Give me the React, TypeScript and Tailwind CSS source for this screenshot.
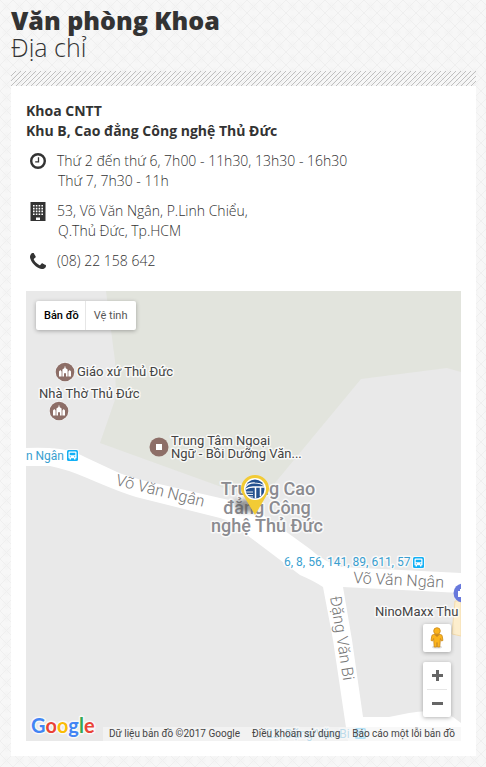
import type { ReactNode } from 'react';

const OPEN_SANS = "font-['Open_Sans','Noto_Sans',sans-serif]";

function PageTexture() {
  return (
    <svg className="absolute inset-0 -z-10 h-full w-full" aria-hidden="true">
      <defs>
        <pattern id="lattice" width="13" height="13" patternUnits="userSpaceOnUse">
          <rect width="13" height="13" fill="#f7f7f7" />
          <path d="M6.5 2 L11 6.5 L6.5 11 L2 6.5Z" fill="#f5f5f5" />
          <path d="M0 0 L13 13 M13 0 L0 13" stroke="#efefef" strokeWidth="1" fill="none" />
        </pattern>
      </defs>
      <rect width="100%" height="100%" fill="url(#lattice)" />
    </svg>
  );
}

function Stripes() {
  return (
    <svg className="block h-[15px] w-full" aria-hidden="true" shapeRendering="crispEdges">
      <defs>
        <pattern id="hatch" width="5" height="5" patternUnits="userSpaceOnUse">
          <path
            d="M4 0h1v1h-1z M3 1h1v1h-1z M2 2h1v1h-1z M1 3h1v1h-1z M0 4h1v1h-1z"
            fill="#bfbfbf"
          />
        </pattern>
      </defs>
      <rect width="100%" height="100%" fill="url(#hatch)" />
    </svg>
  );
}

function ClockIcon() {
  return (
    <svg width="16" height="16" viewBox="0 0 16 16" fill="none" stroke="#333" aria-hidden="true">
      <circle cx="8" cy="8" r="6.8" strokeWidth="2.4" />
      <path d="M8.5 4.2V8.9H5.2" strokeWidth="1.3" />
    </svg>
  );
}

function BuildingIcon() {
  return (
    <svg width="16" height="19" viewBox="0 0 16 19" aria-hidden="true">
      <path fill="#333" d="M0.5 0h15v19h-15z" />
      <path
        fill="#fff"
        d="M3 3h1.6v1.6H3z M5.8 3h1.6v1.6H5.8z M8.6 3h1.6v1.6H8.6z M11.4 3h1.6v1.6h-1.6z M3 5.8h1.6v1.6H3z M5.8 5.8h1.6v1.6H5.8z M8.6 5.8h1.6v1.6H8.6z M11.4 5.8h1.6v1.6h-1.6z M3 8.6h1.6v1.6H3z M5.8 8.6h1.6v1.6H5.8z M8.6 8.6h1.6v1.6H8.6z M11.4 8.6h1.6v1.6h-1.6z M3 11.4h1.6V13H3z M5.8 11.4h1.6V13H5.8z M8.6 11.4h1.6V13H8.6z M11.4 11.4h1.6V13h-1.6z M6 15.5h4V18H6z"
      />
    </svg>
  );
}

function PhoneIcon() {
  return (
    <svg width="16" height="16" viewBox="0 0 1408 1408" aria-hidden="true">
      <path
        fill="#333"
        d="M1408 1112q0 27-10 70.500t-21 68.500q-21 50-122 106q-94 51-186 51q-27 0-53-3.500t-57.500-12.500t-47-14.500t-55.500-20.500t-49-18q-98-35-175-83q-127-79-264-216t-216-264q-48-77-83-175q-3-9-18-49t-20.500-55.500t-14.500-47t-12.500-57.500t-3.500-53q0-92 51-186q56-101 106-122q25-11 68.500-21t70.500-10q14 0 21 3q18 6 53 76q11 19 30 54t35 63.500t31 53.500q3 4 17.500 25t21.500 35.500t7 28.500q0 20-28.500 50t-62 55t-62 53t-28.500 46q0 9 5 22.500t8.500 20.500t14 24t11.500 19q76 137 174 235t235 174q2 1 19 11.500t24 14t20.500 8.500t22.500 5q18 0 46-28.500t53-62t55-62t50-28.500q14 0 28.500 7t35.500 21.500t25 17.500q25 15 53.500 31t63.500 35t54 30q70 35 76 53q3 7 3 21z"
      />
    </svg>
  );
}

function ContactRow({ icon, children }: { icon: ReactNode; children: ReactNode }) {
  return (
    <li className="flex gap-[11px]">
      <span className="flex h-5 w-5 shrink-0 items-center justify-end pl-1">{icon}</span>
      <span className="min-w-0">{children}</span>
    </li>
  );
}

function BusStop({ x, y }: { x: number; y: number }) {
  return (
    <g transform={`translate(${x} ${y})`}>
      <rect x="-1" y="-1" width="13" height="13" rx="2" fill="#fff" opacity="0.7" />
      <rect width="11" height="11" rx="1.5" fill="#12b0f5" />
      <path fill="#fff" d="M2.5 1.500h6q1 0 1 1v5.700h-1v1.300h-1.500v-1.300h-3v1.300h-1.500v-1.300h-1v-5.700q0-1 1-1z" />
      <path fill="#12b0f5" d="M2.700 2.700h5.600v2.600h-5.600z M2.800 6.200h1v1h-1z M7.200 6.200h1v1h-1z" />
    </g>
  );
}

function ChurchPin({ x, y }: { x: number; y: number }) {
  return (
    <g transform={`translate(${x} ${y})`}>
      <circle r="10" fill="#fff" opacity="0.5" />
      <circle r="9.300" fill="#8d6e67" />
      <path
        fill="#fff"
        d="M-6 4.500v-5l1.300-1.500 1.300 1.500v5z M3.400 4.500v-5l1.300-1.500 1.300 1.500v5z M-2.600 4.500v-7l2.100-1.500v-1.500h1v1.500l2.100 1.500v7h-1.600v-2.500a1 1 0 0 0-2 0v2.500z"
      />
    </g>
  );
}

function MapDrawing() {
  return (
    <svg
      className="block h-full w-full font-['Roboto','Noto_Sans',sans-serif]"
      viewBox="0 0 435 450"
      preserveAspectRatio="xMidYMid slice"
      role="img"
      aria-label="Bản đồ"
    >
      <rect width="435" height="450" fill="#e9e9e9" />
      <path d="M80 0L89 70L90 106L74 152L234 210L335 88L421 77L435 81V0Z" fill="#e2e4dd" />
      <path d="M429 310L426 343L435 345V310Z" fill="#fdeecd" stroke="#f3dcae" />

      <path
        fill="#fff"
        d="M0 157Q18 156 34 158Q48 160 61 167L91 181Q100 185 120 190L194 207Q218 211 237 224L284 258Q298 271 316 276L435 282V302L317 296L326 349L337 426H363L383 422Q410 417 427 426L435 432V450H322L307 349L297 296Q288 290 274 284L217 241Q206 230 194 227L110 206Q96 202 61 187Q40 178 24 175H0Z"
      />

      <g fill="#777" fontSize="16" fontWeight="300">
        <text transform="translate(89 194) rotate(14)">Võ Văn Ngân</text>
        <text transform="translate(327 292) rotate(3)">Võ Văn Ngân</text>
        <text transform="translate(304 306) rotate(81)">Đặng Văn Bi</text>
      </g>

      <g className="[paint-order:stroke]" stroke="#fff" strokeWidth="3" strokeOpacity="0.75" strokeLinejoin="round">
        <g fill="#3a9fd0" fontSize="12">
          <text x="38" y="169" textAnchor="end">Võ Văn Ngân</text>
          <text x="258" y="275">6, 8, 56, 141, 89, 611, 57</text>
          <text x="240" y="447">23, Đặng Văn Bi</text>
        </g>
        <g fill="#444" fontSize="13">
          <text x="51" y="85">Giáo xứ Thủ Đức</text>
          <text x="13" y="107">Nhà Thờ Thủ Đức</text>
          <text x="145" y="154">Trung Tâm Ngoại</text>
          <text x="145" y="167">Ngữ - Bồi Dưỡng Văn...</text>
          <text x="349" y="325">NinoMaxx Thu</text>
        </g>
        <g fill="#8b8b90" fontSize="18" fontWeight="500" textAnchor="middle">
          <text x="242" y="204">Trường Cao</text>
          <text x="241" y="223">đẳng Công</text>
          <text x="241" y="241">nghệ Thủ Đức</text>
        </g>
      </g>

      <BusStop x={41} y={159} />
      <BusStop x={387} y={266} />
      <BusStop x={329} y={437} />
      <ChurchPin x={39} y={81} />
      <ChurchPin x={33} y={120} />
      <circle cx="133" cy="156" r="9.500" fill="#8d6e67" />
      <rect x="130" y="153" width="6" height="6" fill="#fff" />
      <circle cx="437" cy="302" r="9.500" fill="#6879dc" />
      <path d="M432 300h8v6h-8z M434 300v-2h4v2" fill="#fff" />

      <defs>
        <filter id="pinShadow" x="-50%" y="-50%" width="200%" height="200%">
          <feGaussianBlur stdDeviation="2" />
        </filter>
        <clipPath id="pinDisc">
          <circle cx="229" cy="198" r="9.500" />
        </clipPath>
      </defs>
      <path d="M208 209h22v12h-18z" fill="#555" opacity="0.6" filter="url(#pinShadow)" />
      <path
        d="M229 224L217.500 204.500C215.800 201.800 215 200 215 197.500A14 13.500 0 0 1 243 197.500C243 200 242.200 201.800 240.500 204.500Z"
        fill="#f2cb35"
      />
      <circle cx="229" cy="198" r="11" fill="#fff" />
      <circle cx="229" cy="198" r="9.500" fill="#24518f" />
      <g clipPath="url(#pinDisc)" stroke="#fff" fill="none">
        <path d="M219 197Q222 191.500 229 192Q235 192 240 196" strokeWidth="1.200" />
        <path d="M218 200Q221 196 227 196H239.500" strokeWidth="1.600" />
        <path d="M229.500 196V208M234.500 196V205" strokeWidth="1.500" />
        <path d="M219 201H227M220 203.500H227M222 206H227" strokeWidth="0.900" />
      </g>
    </svg>
  );
}

function GoogleLogo() {
  return (
    <svg
      className="absolute bottom-0 left-1 h-[28px] w-[70px] font-['Lato',sans-serif]"
      viewBox="0 0 70 28"
      role="img"
      aria-label="Google"
    >
      <text
        x="1"
        y="20"
        fontSize="20"
        fontWeight="700"
        className="[paint-order:stroke]"
        stroke="#fff"
        strokeWidth="3"
        strokeOpacity="0.7"
        strokeLinejoin="round"
      >
        <tspan fill="#4285f4">G</tspan>
        <tspan fill="#ea4335">o</tspan>
        <tspan fill="#fbbc05">o</tspan>
        <tspan fill="#4285f4">g</tspan>
        <tspan fill="#34a853">l</tspan>
        <tspan fill="#ea4335">e</tspan>
      </text>
    </svg>
  );
}

function Pegman() {
  return (
    <svg width="14" height="22" viewBox="0 0 14 22" aria-hidden="true">
      <ellipse cx="7" cy="20" rx="5" ry="1.600" fill="#ddd" />
      <path
        d="M3.500 7.500h7q1.500 0 1.800 1.800l.6 4.200-1.500.5-1-2.500-.6 8.500H7.400L7 15.500l-.4 4.500H4.200l-.6-8.500-1 2.500-1.500-.5.600-4.200q.3-1.800 1.800-1.800z"
        fill="#fbb41c"
        stroke="#c8871b"
        strokeWidth="0.800"
      />
      <circle cx="7" cy="4" r="3.300" fill="#fbb41c" stroke="#c8871b" strokeWidth="0.800" />
      <path d="M4.500 7.800L7 10l2.500-2.200z" fill="#c8871b" />
    </svg>
  );
}

function OfficeMap() {
  return (
    <div className="relative h-[450px] overflow-hidden font-['Roboto','Noto_Sans',sans-serif]">
      <MapDrawing />

      <div className="absolute left-2.5 top-2.5 flex h-[29px] rounded-xs bg-white text-[11px] shadow-[0_1px_4px_rgba(0,0,0,0.3)]">
        <button type="button" className="pl-2 pr-1.5 font-medium text-black">
          Bản đồ
        </button>
        <button type="button" className="border-l border-[#e6e6e6] px-2 text-[#565656]">
          Vệ tinh
        </button>
      </div>

      <div className="absolute bottom-6 right-2.5 flex w-7 flex-col gap-2.5">
        <button
          type="button"
          aria-label="Chế độ xem phố"
          className="flex h-7 items-center justify-center rounded-xs bg-white shadow-[0_1px_4px_rgba(0,0,0,0.3)]"
        >
          <Pegman />
        </button>
        <div className="flex flex-col rounded-xs bg-white shadow-[0_1px_4px_rgba(0,0,0,0.3)]">
          <button type="button" aria-label="Phóng to" className="flex h-[27px] items-center justify-center">
            <svg width="11" height="11" viewBox="0 0 11 11" aria-hidden="true">
              <path d="M4 0h3v4h4v3H7v4H4V7H0V4h4z" fill="#666" />
            </svg>
          </button>
          <span className="mx-1 h-px bg-[#e6e6e6]" />
          <button type="button" aria-label="Thu nhỏ" className="flex h-[27px] items-center justify-center">
            <svg width="11" height="3" viewBox="0 0 11 3" aria-hidden="true">
              <path d="M0 0h11v3H0z" fill="#666" />
            </svg>
          </button>
        </div>
      </div>

      <GoogleLogo />

      <div className="absolute bottom-0 right-0 flex h-3.5 gap-3 whitespace-nowrap bg-[#f5f5f5]/70 px-1.5 text-[10px] leading-[14px] text-[#444]">
        <span>Dữ liệu bản đồ ©2017 Google</span>
        <a href="#terms">Điều khoản sử dụng</a>
        <a href="#report">Báo cáo một lỗi bản đồ</a>
      </div>
    </div>
  );
}

export default function App() {
  return (
    <main
      className={`relative isolate min-h-screen pb-[11px] pl-[11px] pr-2.5 pt-[7px] text-[#333] ${OPEN_SANS}`}
    >
      <PageTexture />
      <header className="mb-2.5 text-[25px] leading-[27px]">
        <h1 className="font-extrabold">Văn phòng Khoa</h1>
        <p className="font-light">Địa chỉ</p>
      </header>

      <section>
        <Stripes />
        <div className="bg-white p-[15px] text-sm leading-5">
          <h2 className="mb-2.5 font-bold">
            Khoa CNTT
            <br />
            Khu B, Cao đẳng Công nghệ Thủ Đức
          </h2>
          <ul className="mb-5 flex flex-col gap-2.5 font-light">
            <ContactRow icon={<ClockIcon />}>
              Thứ 2 đến thứ 6, 7h00 - 11h30, 13h30 - 16h30
              <span className="block pl-px">Thứ 7, 7h30 - 11h</span>
            </ContactRow>
            <ContactRow icon={<BuildingIcon />}>
              53, Võ Văn Ngân, P.Linh Chiểu,
              <span className="block pl-px">Q.Thủ Đức, Tp.HCM</span>
            </ContactRow>
            <ContactRow icon={<PhoneIcon />}>(08) 22 158 642</ContactRow>
          </ul>
          <OfficeMap />
        </div>
      </section>
    </main>
  );
}
